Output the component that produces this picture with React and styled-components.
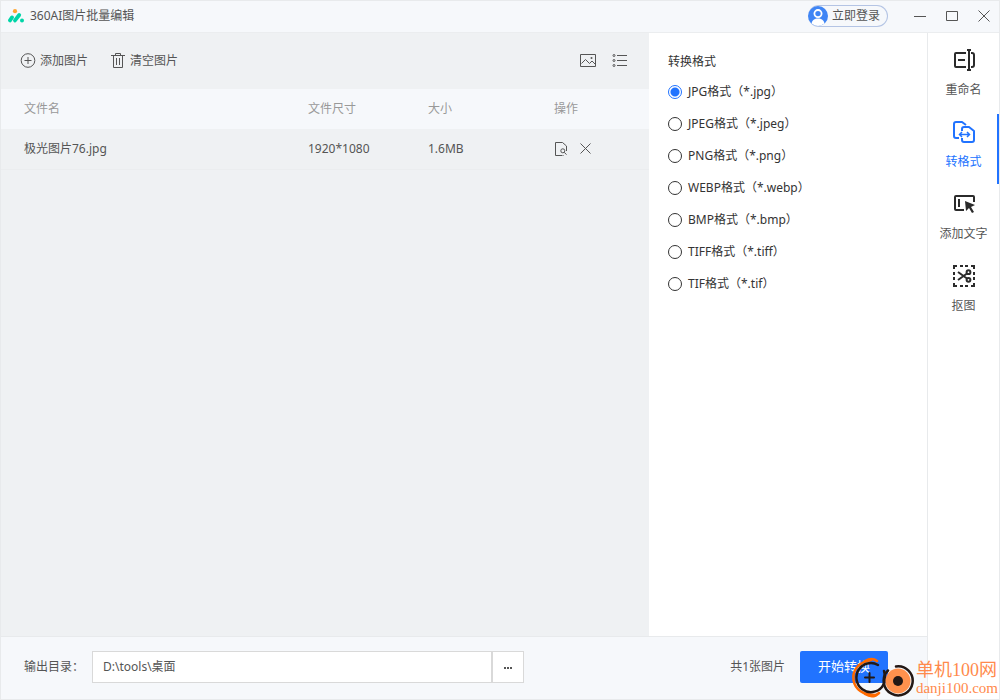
import React, { useState } from 'react';
import styled, { createGlobalStyle } from 'styled-components';

const GlobalStyle = createGlobalStyle`
    * {
        box-sizing: border-box;
    }

    body {
        margin: 0;
    }

    body, button, input {
        font-family: 'Noto Sans', 'Noto Sans CJK SC', sans-serif;
        font-size: 12px;
        line-height: 16px;
    }

    button {
        padding: 0;
        border: 0;
        background: none;
        color: inherit;
        cursor: pointer;
    }

    svg {
        display: block;
        flex: none;
    }
`;

const Window = styled.div`
    position: relative;
    display: flex;
    flex-direction: column;
    min-height: 100vh;
    border: 1px solid #e8eaec;
    background: #fff;
    color: #555;
`;

const TitleBar = styled.header`
    display: flex;
    align-items: center;
    height: 32px;
    padding: 0 3px 2px 7px;
    border-bottom: 1px solid #ebedef;
    background: #f6f8fb;
`;

const AppName = styled.h1`
    flex: 1;
    margin: 0 0 0 6px;
    font-size: 12px;
    font-weight: 400;
`;

const LoginButton = styled.button`
    display: flex;
    align-items: center;
    gap: 4px;
    height: 22px;
    margin-right: 20px;
    padding-right: 7px;
    border: 1px solid #b4c4e4;
    border-left: 0;
    border-radius: 11px;
`;

const WindowButtons = styled.div`
    display: flex;
`;

const WindowButton = styled.button`
    display: grid;
    place-items: center;
    width: 32px;
    height: 28px;

    &:last-child {
        width: 24px;
        margin-left: 4px;
    }
    &:first-child {
        width: 24px;
        margin-right: 4px;
    }
`;

const Body = styled.div`
    display: flex;
    flex: 1;
`;

const Workspace = styled.div`
    display: flex;
    flex: 1;
    flex-direction: column;
    border-right: 1px solid #e8eaec;
`;

const Panels = styled.div`
    display: flex;
    flex: 1;
`;

const FileList = styled.main`
    flex: 1;
    background: #eff1f3;
`;

const Toolbar = styled.div`
    display: flex;
    align-items: center;
    gap: 22px;
    height: 56px;
    padding: 0 21px 0 19px;
`;

const ToolButton = styled.button`
    display: flex;
    align-items: center;
    gap: 4px;
`;

const ViewButtons = styled.div`
    display: flex;
    gap: 16px;
    margin-left: auto;
`;

const Table = styled.table`
    width: 100%;
    table-layout: fixed;
    border-collapse: collapse;
`;

const HeadCell = styled.th`
    width: ${props => props.$width || 'auto'};
    height: 40px;
    padding: 0 0 0 ${props => props.$indent || '0'};
    background: #f6f8fb;
    color: #999;
    font-weight: 400;
    text-align: left;
`;

const Cell = styled.td`
    height: 40px;
    padding: 0 0 0 ${props => props.$indent || '0'};
    border-bottom: 1px solid #ebedef;
`;

const RowActions = styled.div`
    display: flex;
    align-items: center;
    gap: 11px;
`;

const Options = styled.form`
    width: 278px;
    padding: 21px 19px;
    background: #fff;
    color: #333;
`;

const FormatGroup = styled.fieldset`
    min-width: 0;
    margin: 0;
    padding: 0;
    border: 0;
`;

const GroupTitle = styled.legend`
    margin-bottom: 6px;
    padding: 0;
`;

const FormatOption = styled.label`
    display: flex;
    align-items: center;
    gap: 6px;
    height: 32px;
`;

const Radio = styled.input`
    appearance: none;
    width: 14px;
    height: 14px;
    margin: 0;
    border: 1px solid #333;
    border-radius: 50%;
    background: #fff;

    &:checked {
        border-color: #2173ff;
        background: radial-gradient(circle, #2173ff 4px, #fff 5px);
    }
`;

const Footer = styled.footer`
    display: flex;
    align-items: center;
    height: 63px;
    padding: 0 39px 2px 23px;
    border-top: 1px solid #e8eaec;
    background: #f6f8fb;
`;

const PathLabel = styled.label`
    width: 68px;
`;

const PathInput = styled.input`
    flex: 0 1 400px;
    min-width: 0;
    height: 32px;
    padding: 0 10px 2px;
    border: 1px solid #d9d9d9;
    background: #fff;
    color: #555;
`;

const BrowseButton = styled.button`
    display: grid;
    place-items: center;
    width: 32px;
    height: 32px;
    border: 1px solid #d9d9d9;
    background: #fff;
`;

const Count = styled.span`
    margin: 0 15px 0 auto;
`;

const StartButton = styled.button`
    width: 88px;
    height: 32px;
    padding-bottom: 2px;
    border-radius: 2px;
    background: #2173ff;
    color: #fff;
    font-size: 13px;
`;

const SideNav = styled.nav`
    display: flex;
    flex-direction: column;
    gap: 2px;
    width: 71px;
    padding-top: 9px;
    background: #fff;
`;

const NavButton = styled.button`
    display: flex;
    flex-direction: column;
    align-items: center;
    gap: 10px;
    height: 70px;
    padding-top: 6px;
    box-shadow: ${props => (props.$active ? 'inset -2px 0 #2173ff' : 'none')};
    color: ${props => (props.$active ? '#2173ff' : '#555')};

    svg {
        color: ${props => (props.$active ? '#2173ff' : '#2b2b2b')};
    }
`;

const Watermark = styled.div`
    position: absolute;
    right: 1px;
    bottom: 0;
    display: flex;
    align-items: center;
    gap: 1px;
    color: #ff8a4c;
    font-family: 'Liberation Serif', 'Noto Sans CJK SC', serif;
    pointer-events: none;
`;

const WatermarkName = styled.div`
    font-size: 18px;
    line-height: 20px;
`;

const WatermarkSite = styled.div`
    font-size: 15px;
    line-height: 16px;
`;

const Icon = ({ size = 16, width, children }) => (
    <svg
        width={width || size}
        height={size}
        viewBox={`0 0 ${width || size} ${size}`}
        fill="none"
        stroke="currentColor"
        aria-hidden="true"
    >
        {children}
    </svg>
);

const Logo = () => (
    <Icon size={16}>
        <g stroke="#00d5a8" strokeWidth="3.8" strokeLinecap="round">
            <path d="M2 12.4 4 9.4" />
            <path d="M7 12.4 11.2 7" />
        </g>
        <circle cx="7" cy="3.2" r="2.1" fill="#ffa431" stroke="none" />
        <circle cx="14" cy="12.6" r="2" fill="#00d5a8" stroke="none" />
    </Icon>
);

const Avatar = () => (
    <Icon size={20}>
        <circle cx="10" cy="10" r="10" fill="#3f85f5" stroke="none" />
        <circle cx="10" cy="7.6" r="3.6" stroke="#fff" strokeWidth="1.8" />
        <path d="M3.6 17.6c.4-3.4 3-5 6.4-5s6 1.6 6.4 5A10 10 0 0 1 10 20a10 10 0 0 1-6.4-2.4z" fill="#fff" stroke="none" />
    </Icon>
);

const AddIcon = () => (
    <Icon>
        <circle cx="8" cy="7.5" r="6.8" />
        <path d="M4.5 7.5h7M8 4v7" />
    </Icon>
);

const TrashIcon = () => (
    <Icon>
        <path d="M1 2.5h14M5.5 2V.5h5V2M3.5 2.5v12h9v-12M6.5 5v7M9.5 5v7" />
    </Icon>
);

const PictureIcon = () => (
    <Icon>
        <path d="M.5 1.500h15v12H.5z" />
        <path d="m1.500 10.500 4-4 4 4 2.500-2.500 3 3" />
        <circle cx="11.500" cy="5" r="1" fill="currentColor" stroke="none" />
    </Icon>
);

const ListIcon = () => (
    <Icon>
        <path d="M5 2.500h10M5 7.500h10M5 12.500h10" />
        <circle cx="2" cy="2.500" r="1" />
        <circle cx="2" cy="7.500" r="1" />
        <circle cx="2" cy="12.500" r="1" />
    </Icon>
);

const PreviewIcon = () => (
    <Icon size={14}>
        <path d="M8 13.500H1.500V.5h7L12.500 4v5M8.500 13.500h1" />
        <circle cx="8.800" cy="8.800" r="2" />
        <path d="m10.300 10.300 2.200 2.400" />
    </Icon>
);

const RemoveIcon = () => (
    <Icon size={14}>
        <path d="m1.500 1.500 10 10M11.500 1.500l-10 10" />
    </Icon>
);

const RenameIcon = () => (
    <Icon size={24}>
        <g strokeWidth="2">
            <path d="M14 5H4Q3 5 3 6v12q0 1 1 1h10" />
            <path d="M19 5h1q2 0 2 2v10q0 2-2 2h-1" />
            <path d="M17 2v20M15 2h4M15 22h4M6 12h7" />
        </g>
    </Icon>
);

const ConvertIcon = () => (
    <Icon size={24}>
        <g strokeWidth="2" strokeLinejoin="round">
            <path d="M7 18H4q-2 0-2-2V4q0-2 2-2h6l4 3" />
            <path d="M10 11V9q0-2 2-2h5l5 4v9q0 2-2 2h-8q-2 0-2-2v-2" />
        </g>
        <path d="M8 14.500h9M10 12l-2.500 2.500L10 17M15 12l2.500 2.500L15 17" strokeWidth="1.500" />
    </Icon>
);

const TextIcon = () => (
    <Icon size={24}>
        <path d="M12 18H4q-1 0-1-1V5q0-1 1-1h17q1 0 1 1v5M7 7v8" strokeWidth="2" />
        <path d="m13 9 10 4-4 2 3 5-2 1-3-5-3 3z" fill="currentColor" stroke="none" />
    </Icon>
);

const CutoutIcon = () => (
    <Icon size={24}>
        <path d="M2 5V2h3M8 2h3M13 2h3M19 2h3v3M22 8v3M22 13v3M22 19v3h-3M16 22h-3M11 22H8M5 22H2v-3M2 16v-3M2 11V8" strokeWidth="2" />
        <g strokeWidth="2">
            <circle cx="16.500" cy="8.200" r="1.900" />
            <circle cx="16.500" cy="15.800" r="1.900" />
            <path d="m6 8 9 6.500M6 16l9-6.500" />
        </g>
    </Icon>
);

const WatermarkLogo = () => (
    <Icon width={64} size={42}>
        <g strokeLinecap="round">
            <path d="M20 3C8 5 1 13 2.500 23c1.500 9 9 15 22.500 15" stroke="#ff6a00" strokeWidth="2.500" />
            <path d="M14 4q7-4 12 0M14 37q8 5 14-1" stroke="#ff6a00" strokeWidth="2.500" />
            <path d="M27 8A14.500 14.500 0 1 0 31 30Q36 24 33 14" stroke="#231815" strokeWidth="2.500" />
            <path d="M14 20.500h9M18.500 16v9" stroke="#231815" strokeWidth="2" />
            <circle cx="47" cy="24" r="12.500" fill="#ff914d" stroke="none" />
            <path d="M45 9.500A14.500 14.500 0 1 1 37 13.500" stroke="#231815" strokeWidth="2.500" />
            <circle cx="47" cy="24" r="5" fill="#231815" stroke="none" />
        </g>
    </Icon>
);

const formats = ['jpg', 'jpeg', 'png', 'webp', 'bmp', 'tiff', 'tif'];

const files = [
    { name: '极光图片76.jpg', dimensions: '1920*1080', size: '1.6MB' },
];

const tools = [
    { label: '重命名', icon: <RenameIcon /> },
    { label: '转格式', icon: <ConvertIcon /> },
    { label: '添加文字', icon: <TextIcon /> },
    { label: '抠图', icon: <CutoutIcon /> },
];

const App = () => {
    const [format, setFormat] = useState('jpg');
    const [tool, setTool] = useState('转格式');
    const [path, setPath] = useState('D:\\tools\\桌面');

    return (
        <Window>
            <GlobalStyle />
            <TitleBar>
                <Logo />
                <AppName>360AI图片批量编辑</AppName>
                <LoginButton>
                    <Avatar />
                    立即登录
                </LoginButton>
                <WindowButtons>
                    <WindowButton aria-label="最小化">
                        <Icon size={12}><path d="M0 6.500h12" /></Icon>
                    </WindowButton>
                    <WindowButton aria-label="最大化">
                        <Icon size={12}><path d="M.5 1.500h11v9H.5z" /></Icon>
                    </WindowButton>
                    <WindowButton aria-label="关闭">
                        <Icon size={12}><path d="m.5.5 11 11M11.500.5l-11 11" /></Icon>
                    </WindowButton>
                </WindowButtons>
            </TitleBar>

            <Body>
                <Workspace>
                    <Panels>
                        <FileList>
                            <Toolbar>
                                <ToolButton><AddIcon />添加图片</ToolButton>
                                <ToolButton><TrashIcon />清空图片</ToolButton>
                                <ViewButtons>
                                    <ToolButton aria-label="缩略图"><PictureIcon /></ToolButton>
                                    <ToolButton aria-label="列表"><ListIcon /></ToolButton>
                                </ViewButtons>
                            </Toolbar>
                            <Table>
                                <thead>
                                    <tr>
                                        <HeadCell $indent="23px">文件名</HeadCell>
                                        <HeadCell $width="120px">文件尺寸</HeadCell>
                                        <HeadCell $width="126px">大小</HeadCell>
                                        <HeadCell $width="95px">操作</HeadCell>
                                    </tr>
                                </thead>
                                <tbody>
                                    {files.map(file => (
                                        <tr key={file.name}>
                                            <Cell $indent="23px">{file.name}</Cell>
                                            <Cell>{file.dimensions}</Cell>
                                            <Cell>{file.size}</Cell>
                                            <Cell>
                                                <RowActions>
                                                    <ToolButton aria-label="预览"><PreviewIcon /></ToolButton>
                                                    <ToolButton aria-label="移除"><RemoveIcon /></ToolButton>
                                                </RowActions>
                                            </Cell>
                                        </tr>
                                    ))}
                                </tbody>
                            </Table>
                        </FileList>

                        <Options>
                            <FormatGroup>
                                <GroupTitle>转换格式</GroupTitle>
                                {formats.map(item => (
                                    <FormatOption key={item}>
                                        <Radio
                                            type="radio"
                                            name="format"
                                            value={item}
                                            checked={format === item}
                                            onChange={() => setFormat(item)}
                                        />
                                        {item.toUpperCase()}格式（*.{item}）
                                    </FormatOption>
                                ))}
                            </FormatGroup>
                        </Options>
                    </Panels>

                    <Footer>
                        <PathLabel htmlFor="output-path">输出目录：</PathLabel>
                        <PathInput
                            id="output-path"
                            value={path}
                            onChange={event => setPath(event.target.value)}
                        />
                        <BrowseButton aria-label="浏览">
                            <Icon size={10}><path d="M1 6h2M4 6h2M7 6h2" strokeWidth="2" /></Icon>
                        </BrowseButton>
                        <Count>共1张图片</Count>
                        <StartButton>开始转换</StartButton>
                    </Footer>
                </Workspace>

                <SideNav>
                    {tools.map(({ label, icon }) => (
                        <NavButton
                            key={label}
                            $active={tool === label}
                            onClick={() => setTool(label)}
                        >
                            {icon}
                            {label}
                        </NavButton>
                    ))}
                </SideNav>
            </Body>

            <Watermark>
                <WatermarkLogo />
                <div>
                    <WatermarkName>单机100网</WatermarkName>
                    <WatermarkSite>danji100.com</WatermarkSite>
                </div>
            </Watermark>
        </Window>
    );
};

export default App;
